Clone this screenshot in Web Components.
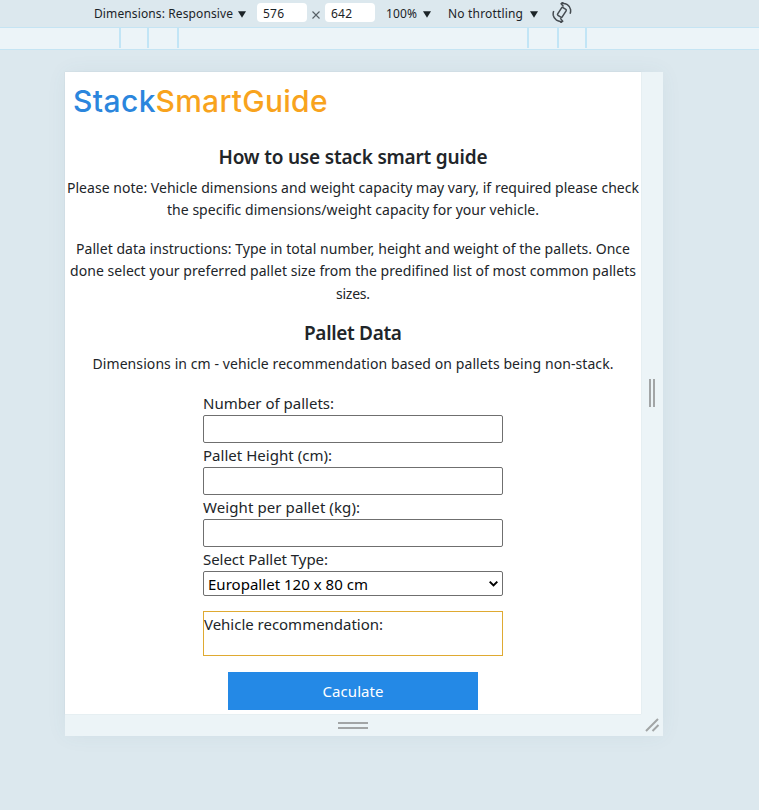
<!DOCTYPE html>
<html lang="en">
<head>
<meta charset="utf-8">
<title>StackSmartGuide</title>
<style>
html,body{margin:0;height:100%;overflow:hidden}
body{background:#dce8ee;font-family:"Noto Sans","Open Sans",sans-serif;color:#212529}
</style>
</head>
<body>
<app-shell></app-shell>
<script>
const define=(name,html,setup)=>customElements.define(name,class extends HTMLElement{
  connectedCallback(){
    if(this.shadowRoot)return;
    this.attachShadow({mode:'open'}).innerHTML=html;
    if(setup)setup(this,this.shadowRoot);
  }
});

// A single line of text whose tracking is adjusted to reach the width in "w".
define('fit-line',`<style>:host{display:block;white-space:nowrap;line-height:inherit}
span{display:inline-block}</style><span><slot></slot></span>`,(el,root)=>{
  const s=root.querySelector('span'),n=el.textContent.length;
  const natural=s.getBoundingClientRect().width;
  const ls=(+el.getAttribute('w')-natural)/(n-1);
  s.style.letterSpacing=ls+'px';
  s.style.marginRight=-ls+'px';
});

define('down-arrow',`<style>:host{display:block;width:8px;height:7px}svg{display:block}</style>
<svg width="8" height="7"><path d="M0 .3h8L4 6.7z" fill="#1b2327"/></svg>`);

define('size-box',`<style>:host{display:block;box-sizing:border-box;width:50px;height:19px;border-radius:4px;background:#fff;padding-left:6px;font-size:12px;line-height:22px;color:#1b2327}</style><slot></slot>`);

define('device-toolbar',`<style>
:host{display:flex;box-sizing:border-box;height:28px;border-bottom:1px solid #c5e4f3;align-items:flex-start;padding:3px 0 0 94px;font-size:12px;line-height:22px;color:#1b2327}
down-arrow{margin-top:8px}
svg{display:block}
</style>
<fit-line w="139">Dimensions: Responsive</fit-line>
<down-arrow style="margin-left:5px"></down-arrow>
<size-box style="margin-left:11px"><fit-line w="21">576</fit-line></size-box>
<svg style="margin:8px 5px 0 5px" width="8" height="8"><path d="M.5.5l7 7M7.5.5l-7 7" stroke="#566066" stroke-width="1.1"/></svg>
<size-box style="margin-left:0"><fit-line w="21">642</fit-line></size-box>
<fit-line w="31" style="margin-left:11px">100%</fit-line>
<down-arrow style="margin-left:6px"></down-arrow>
<fit-line w="75" style="margin-left:17px">No throttling</fit-line>
<down-arrow style="margin-left:7px"></down-arrow>
<svg style="margin:-1px 0 0 14px" width="21" height="21" viewBox="0 0 21 21" fill="none" stroke="#454b50" stroke-width="1.5">
<rect x="7.2" y="5.8" width="5.4" height="9.2" rx="1" transform="rotate(33 9.9 10.4)"/>
<path d="M9.6 1.6c4-.9 8.3 1.8 9 6 .2 1.4 0 2.8-.5 4.1M10.2 19.2c-4 .9-8.3-1.8-9-6-.2-1.4 0-2.8.5-4.1"/>
<path d="M11.7-.6L9.1 1.7l2.4 2.8M8.1 21.4l2.6-2.3-2.4-2.8" stroke-width="1.4"/>
</svg>`);

define('width-ruler',`<style>
:host{display:grid;box-sizing:border-box;height:22px;border-bottom:1px solid #c5e4f3;background:#ecf4f8;grid-template-columns:119px 28px 30px 350px 30px 28px 1fr}
i{height:20px;border-right:2px solid #c2e5f6;margin-right:-2px}i:last-child{border:0;margin:0}
</style><i></i><i></i><i></i><i></i><i></i><i></i><i></i>`);

define('site-logo',`<style>
:host{display:flex;height:72.5px;box-sizing:border-box;padding:9px 0 0 8px;font:500 30px/40px Inter,sans-serif;color:#2b86dd}
.o{color:#f8a31d}
</style><fit-line w="82.5">Stack</fit-line><fit-line class="o" w="172">SmartGuide</fit-line>`);

define('section-title',`<style>:host{display:flex;justify-content:center;height:24px;margin-bottom:8px;font-size:19px;line-height:24px;font-weight:600}</style><slot></slot>`);

define('text-block',`<style>:host{display:flex;flex-direction:column;align-items:center;font-size:14px;line-height:22.5px;margin-bottom:16px}</style><slot></slot>`);

define('form-field',`<style>
:host{display:block}
.label{height:24px;font-size:15px;line-height:25px}
input{display:block;box-sizing:border-box;width:300px;height:28px;margin:0;border:1px solid #6f6f6f;border-radius:2px;background:#fff}
</style><div class="label"><slot></slot></div><input type="text">`);

define('pallet-select',`<style>
:host{display:block}
.label{height:24px;font-size:15px;line-height:25px}
.box{display:flex;box-sizing:border-box;width:300px;height:25px;border:1px solid #6f6f6f;border-radius:2px;background:#fff;padding:0 4px;justify-content:space-between;font-size:15px;line-height:25px;color:#000}
svg{margin-top:8px}
</style><div class="label"><slot></slot></div><div class="box"><fit-line w="160">Europallet 120 x 80 cm</fit-line>
<svg width="9" height="8"><path d="M.7 1.6l3.8 3.8 3.8-3.8" fill="none" stroke="#000" stroke-width="2"/></svg></div>`);

define('result-box',`<style>:host{display:block;box-sizing:border-box;width:300px;height:45px;margin:15px 0 16px;border:1px solid #dfaa32;font-size:15px;line-height:25px}</style><slot></slot>`);

define('action-button',`<style>button{display:flex;justify-content:center;width:250px;height:38px;margin:0 25px;padding:0;border:0;background:#2489e6;color:#fff;font:15px/39px "Noto Sans",sans-serif}</style><button><slot></slot></button>`);

define('guide-page',`<style>
:host{display:block;height:642px;background:#fff;overflow:hidden}
.form{width:300px;margin:-1px 0 0 138px}
.intro{margin-bottom:15px}
</style>
<site-logo></site-logo>
<section-title><fit-line w="269">How to use stack smart guide</fit-line></section-title>
<text-block><fit-line w="572">Please note: Vehicle dimensions and weight capacity may vary, if required please check</fit-line><fit-line w="372">the specific dimensions/weight capacity for your vehicle.</fit-line></text-block>
<text-block><fit-line w="554">Pallet data instructions: Type in total number, height and weight of the pallets. Once</fit-line><fit-line w="566">done select your preferred pallet size from the predifined list of most common pallets</fit-line><fit-line w="34">sizes.</fit-line></text-block>
<section-title><fit-line w="98">Pallet Data</fit-line></section-title>
<text-block class="intro"><fit-line w="521">Dimensions in cm - vehicle recommendation based on pallets being non-stack.</fit-line></text-block>
<div class="form" style="margin-top:0">
<form-field><fit-line w="131">Number of pallets:</fit-line></form-field>
<form-field><fit-line w="129">Pallet Height (cm):</fit-line></form-field>
<form-field><fit-line w="157">Weight per pallet (kg):</fit-line></form-field>
<pallet-select><fit-line w="125">Select Pallet Type:</fit-line></pallet-select>
<result-box><fit-line w="179">Vehicle recommendation:</fit-line></result-box>
<action-button><fit-line w="61">Caculate</fit-line></action-button>
</div>`);

define('device-frame',`<style>
:host{display:grid;grid-template:642px 22px / 576px 22px;width:598px;margin:22px 0 0 65px;background:#ecf4f7;box-shadow:0 0 20px rgba(70,110,125,.06)}
guide-page{box-shadow:0 0 1px rgba(80,90,90,.2)}
.h{display:grid;place-items:center}svg{display:block}
</style>
<guide-page></guide-page>
<div class="h"><svg width="8" height="28"><path d="M2 0v28M6 0v28" stroke="#a2a5a6" stroke-width="2"/></svg></div>
<div class="h"><svg width="30" height="8"><path d="M0 2h30M0 7h30" stroke="#a2a5a6" stroke-width="2"/></svg></div>
<div class="h"><svg width="16" height="16"><path d="M2 14L14 2M8.5 14l6-6" stroke="#a2a5a6" stroke-width="2"/></svg></div>`);

define('app-shell',`<style>:host{display:block;height:810px;background:#dce8ee;overflow:hidden}</style>
<device-toolbar></device-toolbar><width-ruler></width-ruler><device-frame></device-frame>`);
</script>
</body>
</html>
